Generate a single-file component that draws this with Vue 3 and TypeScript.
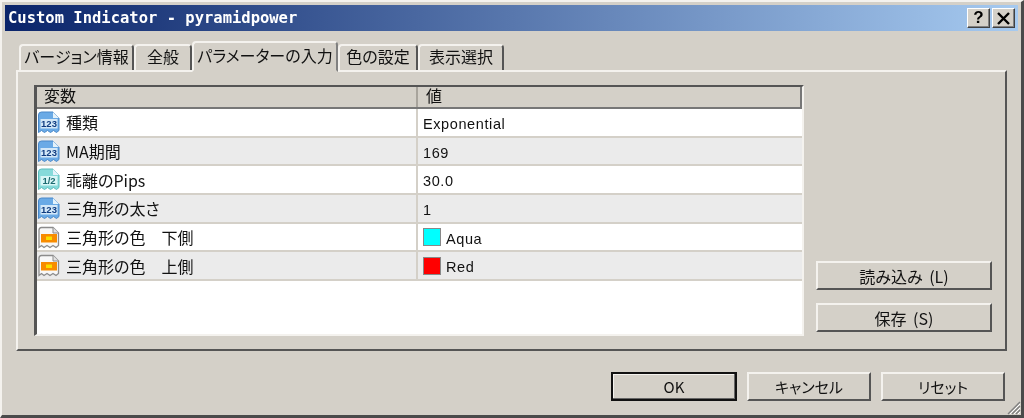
<template>
  <div class="window">
    <div class="titlebar">
      <span class="title">Custom Indicator - pyramidpower</span>
      <div class="title-buttons">
        <button class="cap-btn">?</button>
        <button class="cap-btn">
          <svg width="17" height="15" viewBox="0 0 17 15"><path d="M3 2 L14 13 M14 2 L3 13" stroke="#000" stroke-width="2.4" /></svg>
        </button>
      </div>
    </div>

    <div class="tabs">
      <div
        v-for="tab in tabs"
        :key="tab.label"
        class="tab"
        :class="{ active: tab.label === activeTab }"
        :style="{ width: tab.width + 'px' }"
      >
        {{ tab.label }}
      </div>
    </div>

    <div class="panel">
      <div class="table">
        <div class="table-head">
          <div class="col-name">変数</div>
          <div class="col-value">値</div>
        </div>
        <div v-for="row in rows" :key="row.name" class="row">
          <div class="cell-name">
            <svg class="row-icon" width="22" height="23" viewBox="0 0 22 23">
              <template v-if="row.kind === 'color'">
                <path d="M1 4 Q1 1.5 3.5 1.5 H15 L20.5 7 V19.5 L18 21.5 L15 19.5 L12 21.5 L9 19.5 L6 21.5 L3.5 19.5 L1 21.5 Z" fill="#f8f8f8" stroke="#8c8c8c" stroke-width="1.3" />
                <path d="M15 1.5 V7 H20.5" fill="#e2e2e2" stroke="#8c8c8c" />
                <rect x="3" y="8" width="16" height="8.5" fill="#f88c00" />
                <rect x="8" y="10.5" width="6" height="3.5" fill="#f8e000" />
              </template>
              <template v-else>
                <path
                  d="M0.5 4 Q0.5 1 3.5 1 H15 L21 7 V19.5 L18.5 21.5 L15.5 19.5 L12.5 21.5 L9.5 19.5 L6.5 21.5 L3.5 19.5 L0.5 21.5 Z"
                  :fill="row.kind === 'int' ? '#6aaae6' : '#86dada'"
                  :stroke="row.kind === 'int' ? '#4a88c8' : '#5cbcbc'"
                />
                <path d="M15 1 V7 H21 Z" fill="#e4f2fb" />
                <rect x="2.5" y="8" width="17" height="9.5" :fill="row.kind === 'int' ? '#d4e8f8' : '#d8f6f6'" />
                <text
                  x="11"
                  y="16.3"
                  text-anchor="middle"
                  class="icon-text"
                  :fill="row.kind === 'int' ? '#103c80' : '#1c6a70'"
                >{{ row.kind === 'int' ? '123' : '1/2' }}</text>
              </template>
            </svg>
            <span>{{ row.name }}</span>
          </div>
          <div class="cell-value">
            <span v-if="row.swatch" class="swatch" :style="{ background: row.swatch }"></span>
            <span>{{ row.value }}</span>
          </div>
        </div>
      </div>
      <div class="side-buttons">
        <button class="btn side">読み込み (L)</button>
        <button class="btn side">保存 (S)</button>
      </div>
    </div>

    <div class="footer">
      <button class="btn foot default">OK</button>
      <button class="btn foot">キャンセル</button>
      <button class="btn foot">リセット</button>
    </div>

    <svg class="grip" width="16" height="16" viewBox="0 0 16 16">
      <path d="M15 3 L3 15 M15 7 L7 15 M15 11 L11 15" stroke="#808080" stroke-width="1.4" />
      <path d="M15 5 L5 15 M15 9 L9 15 M15 13 L13 15" stroke="#fff" stroke-width="1" />
    </svg>
  </div>
</template>

<script setup lang="ts">
interface ParamRow {
  name: string;
  value: string;
  kind: "int" | "real" | "color";
  swatch?: string;
}

const activeTab = "パラメーターの入力";

const tabs = [
  { label: "バージョン情報", width: 115 },
  { label: "全般", width: 58 },
  { label: "パラメーターの入力", width: 146 },
  { label: "色の設定", width: 80 },
  { label: "表示選択", width: 86 },
];

const rows: ParamRow[] = [
  { name: "種類", value: "Exponential", kind: "int" },
  { name: "MA期間", value: "169", kind: "int" },
  { name: "乖離のPips", value: "30.0", kind: "real" },
  { name: "三角形の太さ", value: "1", kind: "int" },
  { name: "三角形の色　下側", value: "Aqua", kind: "color", swatch: "#00ffff" },
  { name: "三角形の色　上側", value: "Red", kind: "color", swatch: "#ff0000" },
];
</script>

<style>
html,
body {
  margin: 0;
  background: #d4d0c8;
}
</style>

<style scoped>
.window {
  position: relative;
  box-sizing: border-box;
  width: 1024px;
  height: 418px;
  padding: 3px 3px 0 3px;
  background: #d4d0c8;
  border-top: 2px solid #f4f2ee;
  border-left: 2px solid #f4f2ee;
  border-right: 3px solid #4a4a4a;
  border-bottom: 3px solid #4a4a4a;
  font-family: "Noto Sans CJK JP", "Liberation Sans", sans-serif;
  font-feature-settings: "palt";
  font-size: 16px;
  color: #111;
  overflow: hidden;
  filter: blur(0.35px);
}

.titlebar {
  display: flex;
  align-items: center;
  justify-content: space-between;
  height: 26px;
  width: 1013px;
  box-sizing: border-box;
  padding: 0 3px 0 3px;
  background: linear-gradient(90deg, #0a246a, #a6caf0);
}

.title {
  font-family: "DejaVu Sans Mono", monospace;
  font-weight: 700;
  font-size: 15.5px;
  color: #fff;
  white-space: nowrap;
}

.title-buttons {
  display: flex;
  gap: 2px;
}

.cap-btn {
  display: flex;
  align-items: center;
  justify-content: center;
  width: 23px;
  height: 20px;
  padding: 0;
  background: #d4d0c8;
  border: 1px solid;
  border-color: #fff #404040 #404040 #fff;
  box-shadow: inset -1px -1px 0 #808080;
  font-family: "Liberation Sans", sans-serif;
  font-weight: 700;
  font-size: 17px;
  color: #000;
}

.tabs {
  display: flex;
  align-items: flex-end;
  height: 28px;
  margin-top: 11px;
  padding-left: 14px;
}

.tab {
  display: flex;
  align-items: center;
  justify-content: center;
  box-sizing: border-box;
  height: 26px;
  padding-bottom: 4px;
  background: #d4d0c8;
  border-top: 2px solid #f4f2ee;
  border-left: 2px solid #f4f2ee;
  border-right: 2px solid #555;
  border-radius: 4px 4px 0 0;
  white-space: nowrap;
}

.tab.active {
  position: relative;
  z-index: 1;
  height: 31px;
  margin-bottom: -2px;
  border-bottom: 2px solid #d4d0c8;
  padding-bottom: 4px;
  border-right-color: #808080;
}

.panel {
  display: flex;
  gap: 12px;
  box-sizing: border-box;
  width: 991px;
  height: 281px;
  margin-left: 11px;
  padding: 13px 14px 0 16px;
  border-top: 2px solid #f4f2ee;
  border-left: 2px solid #f4f2ee;
  border-right: 2px solid #555;
  border-bottom: 2px solid #555;
}

.table {
  box-sizing: border-box;
  flex: none;
  width: 770px;
  height: 251px;
  background: #fff;
  border-top: 2px solid #555;
  border-left: 3px solid #555;
  border-right: 2px solid #f4f2ee;
  border-bottom: 2px solid #f4f2ee;
}

.table-head {
  display: flex;
  height: 22px;
  box-sizing: border-box;
  background: #d4d0c8;
  border-bottom: 2px solid #777;
  border-right: 2px solid #777;
  line-height: 17px;
}

.col-name {
  box-sizing: border-box;
  width: 381px;
  padding-left: 7px;
  border-right: 2px solid #a8a49c;
}

.col-value {
  padding-left: 8px;
}

.row {
  display: flex;
  box-sizing: border-box;
  height: 28.7px;
  border-bottom: 2px solid #d4d0c8;
}

.row:nth-child(odd) {
  background: #ebebeb;
}

.cell-name {
  display: flex;
  align-items: center;
  gap: 6px;
  box-sizing: border-box;
  width: 381px;
  padding-left: 1px;
  border-right: 2px solid #d4d0c8;
}

.cell-value {
  display: flex;
  align-items: center;
  gap: 5px;
  padding-left: 5px;
  font-family: "Liberation Sans", sans-serif;
  font-size: 14.5px;
  letter-spacing: 0.6px;
}

.cell-value span:last-child {
  padding-top: 3px;
}

.cell-value .swatch {
  padding-top: 0;
}

.row-icon {
  flex: none;
}

.icon-text {
  font-family: "Liberation Sans", sans-serif;
  font-weight: 700;
  font-size: 9.5px;
  letter-spacing: 0;
}

.swatch {
  box-sizing: border-box;
  width: 18px;
  height: 18px;
  border: 1px solid #888;
}

.side-buttons {
  display: flex;
  flex-direction: column;
  justify-content: flex-end;
  gap: 13px;
  height: 247px;
}

.btn {
  box-sizing: border-box;
  padding: 0;
  background: #d4d0c8;
  border: 2px solid;
  border-color: #f4f2ee #555 #555 #f4f2ee;
  font-family: "Noto Sans CJK JP", "Liberation Sans", sans-serif;
  font-feature-settings: "palt";
  font-size: 16px;
  word-spacing: 3px;
  color: #111;
}

.side {
  width: 176px;
  height: 29px;
}

.footer {
  display: flex;
  justify-content: flex-end;
  gap: 10px;
  width: 1000px;
  margin-top: 21px;
}

.foot {
  width: 124px;
  height: 29px;
  font-size: 15px;
}

.foot.default {
  width: 126px;
  border: 2px solid #111;
  box-shadow: inset -1px -1px 0 #666, inset 1px 1px 0 #f4f2ee;
}

.grip {
  position: absolute;
  right: 0;
  bottom: 0;
}
</style>
